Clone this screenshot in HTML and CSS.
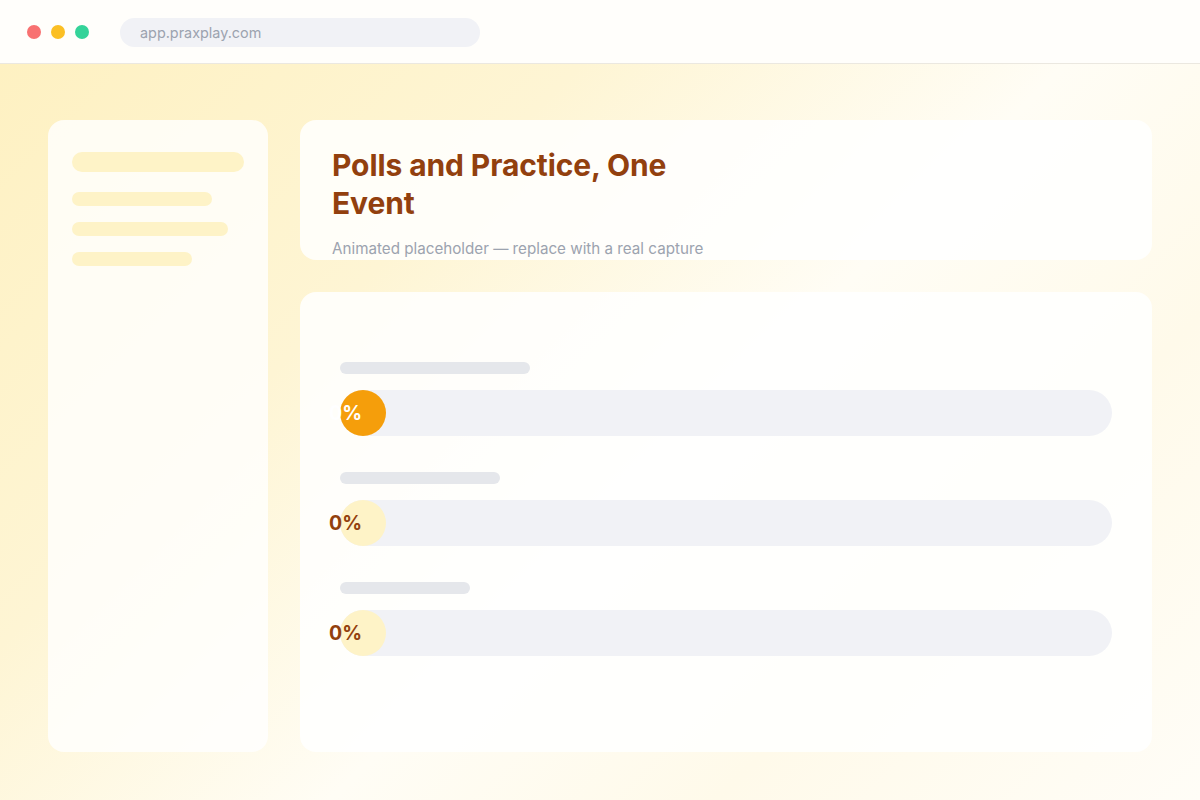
FILE: index.html
```html
<!DOCTYPE html>
<html lang="en">
<head>
<meta charset="UTF-8">
<meta name="viewport" content="width=device-width, initial-scale=1.0">
<title>Praxplay</title>
<link rel="stylesheet" href="styles.css">
</head>
<body>
<div class="browser">
    <div class="topbar">
        <div class="dots">
            <span class="dot red"></span>
            <span class="dot yellow"></span>
            <span class="dot green"></span>
        </div>
        <div class="url">app.praxplay.com</div>
    </div>
    <div class="stage">
        <aside class="sidebar">
            <div class="sk sk-head"></div>
            <div class="sk" style="width:140px"></div>
            <div class="sk" style="width:156px"></div>
            <div class="sk" style="width:120px"></div>
        </aside>
        <main class="content">
            <div class="card header-card">
                <h1>Polls and Practice, One Event</h1>
                <p class="sub">Animated placeholder — replace with a real capture</p>
            </div>
            <div class="card poll-card">
                <div class="row">
                    <div class="label" style="width:190px"></div>
                    <div class="track"><div class="fill hot"><span>0%</span></div></div>
                </div>
                <div class="row">
                    <div class="label" style="width:160px"></div>
                    <div class="track"><div class="fill"><span>0%</span></div></div>
                </div>
                <div class="row">
                    <div class="label" style="width:130px"></div>
                    <div class="track"><div class="fill"><span>0%</span></div></div>
                </div>
            </div>
        </main>
    </div>
</div>
</body>
</html>
```

FILE: styles.css
```css
body {
    margin: 0;
    padding: 0;
    font-family: Inter, "Noto Sans", Arial, sans-serif;
    background: #fffdf7;
}
.browser {
    width: 1200px;
    height: 800px;
    overflow: hidden;
}
.topbar {
    height: 63px;
    background-color: #fffefb;
    border-bottom: 1px solid #ebe8e0;
    display: flex;
    align-items: center;
    padding: 0 27px;
    gap: 31px;
}
.dots {
    display: flex;
    gap: 10px;
}
.dot {
    width: 14px;
    height: 14px;
    border-radius: 50%;
}
.red { background-color: #f87171; }
.yellow { background-color: #fbbf24; }
.green { background-color: #34d399; }
.url {
    width: 340px;
    height: 29px;
    line-height: 29px;
    padding-left: 20px;
    margin-top: 1px;
    border-radius: 15px;
    background-color: #f1f2f6;
    color: #9ca3af;
    font-size: 14.4px;
}
.stage {
    height: 736px;
    box-sizing: border-box;
    padding: 56px 48px 48px;
    display: flex;
    gap: 32px;
    background: linear-gradient(135deg, #fef1c2 0%, #fef5d4 30%, #fffdf5 55%, #fffaea 75%, #fffdf7 100%);
}
.sidebar {
    width: 220px;
    box-sizing: border-box;
    padding: 32px 24px;
    background-color: rgba(255, 255, 255, 0.8);
    border-radius: 16px;
    display: flex;
    flex-direction: column;
    align-items: flex-start;
    gap: 16px;
}
.sk {
    height: 14px;
    border-radius: 7px;
    background-color: #fef3c7;
}
.sk-head {
    width: 172px;
    height: 20px;
    border-radius: 10px;
    margin-bottom: 4px;
}
.content {
    flex: 1;
    display: flex;
    flex-direction: column;
    gap: 32px;
}
.card {
    background-color: rgba(255, 255, 255, 0.85);
    border-radius: 16px;
    box-sizing: border-box;
}
.header-card {
    height: 140px;
    padding: 26px 32px 0;
    overflow: hidden;
}
h1 {
    margin: 0;
    max-width: 400px;
    font-size: 30px;
    line-height: 38px;
    font-weight: 700;
    letter-spacing: -0.1px;
    color: #92400e;
}
.sub {
    margin: 17px 0 0;
    font-size: 15.2px;
    color: #9ca3af;
}
.poll-card {
    flex: 1;
    padding: 70px 40px 40px;
    display: flex;
    flex-direction: column;
    gap: 36px;
}
.row {
    display: flex;
    flex-direction: column;
    gap: 16px;
}
.label {
    height: 12px;
    border-radius: 6px;
    background-color: #e5e7eb;
}
.track {
    height: 46px;
    border-radius: 23px;
    background-color: #f1f2f6;
}
.fill {
    width: 46px;
    height: 46px;
    border-radius: 23px;
    background-color: #fef3c7;
    display: flex;
    align-items: center;
    justify-content: flex-end;
    padding-right: 24px;
    box-sizing: border-box;
    color: #92400e;
    font-size: 19.5px;
    font-weight: 700;
    white-space: nowrap;
}
.fill.hot {
    background-color: #f59e0b;
    color: #fff;
}
```
